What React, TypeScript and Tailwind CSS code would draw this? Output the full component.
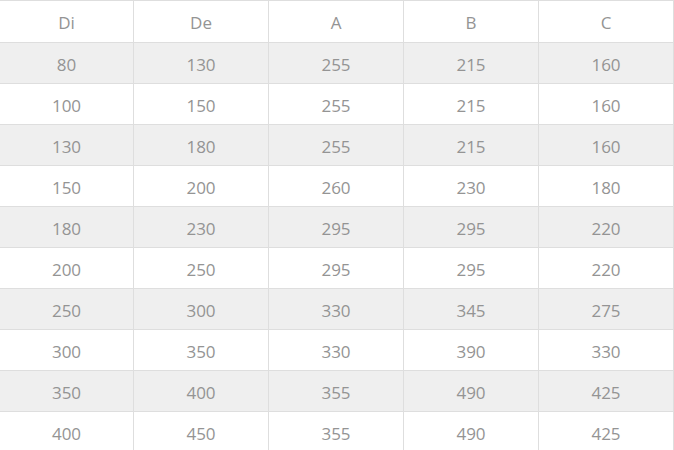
const HEAD = ["Di", "De", "A", "B", "C"];

const ROWS = [
  [80, 130, 255, 215, 160],
  [100, 150, 255, 215, 160],
  [130, 180, 255, 215, 160],
  [150, 200, 260, 230, 180],
  [180, 230, 295, 295, 220],
  [200, 250, 295, 295, 220],
  [250, 300, 330, 345, 275],
  [300, 350, 330, 390, 330],
  [350, 400, 355, 490, 425],
  [400, 450, 355, 490, 425],
];

const COLS = "grid grid-cols-[134px_135px_135px_135px_135px]";

export default function App() {
  return (
    <div className="h-[450px] w-[674px] overflow-hidden bg-white font-['Open_Sans',sans-serif] text-[17px] text-[#949494]">
      <div className={`${COLS} border-y border-[#dedede]`}>
        {HEAD.map((h) => (
          <div
            key={h}
            className="flex h-[41px] items-center justify-center border-r border-[#dedede] pt-[3px]"
          >
            {h}
          </div>
        ))}
      </div>
      {ROWS.map((r, i) => (
        <div
          key={r[0]}
          className={`${COLS} border-b border-[#dedede] ${i % 2 === 0 ? "bg-[#efefef]" : "bg-white"}`}
        >
          {r.map((v, j) => (
            <div
              key={j}
              className="flex h-[40px] items-center justify-center border-r border-[#dedede] pt-[3px]"
            >
              {v}
            </div>
          ))}
        </div>
      ))}
    </div>
  );
}
